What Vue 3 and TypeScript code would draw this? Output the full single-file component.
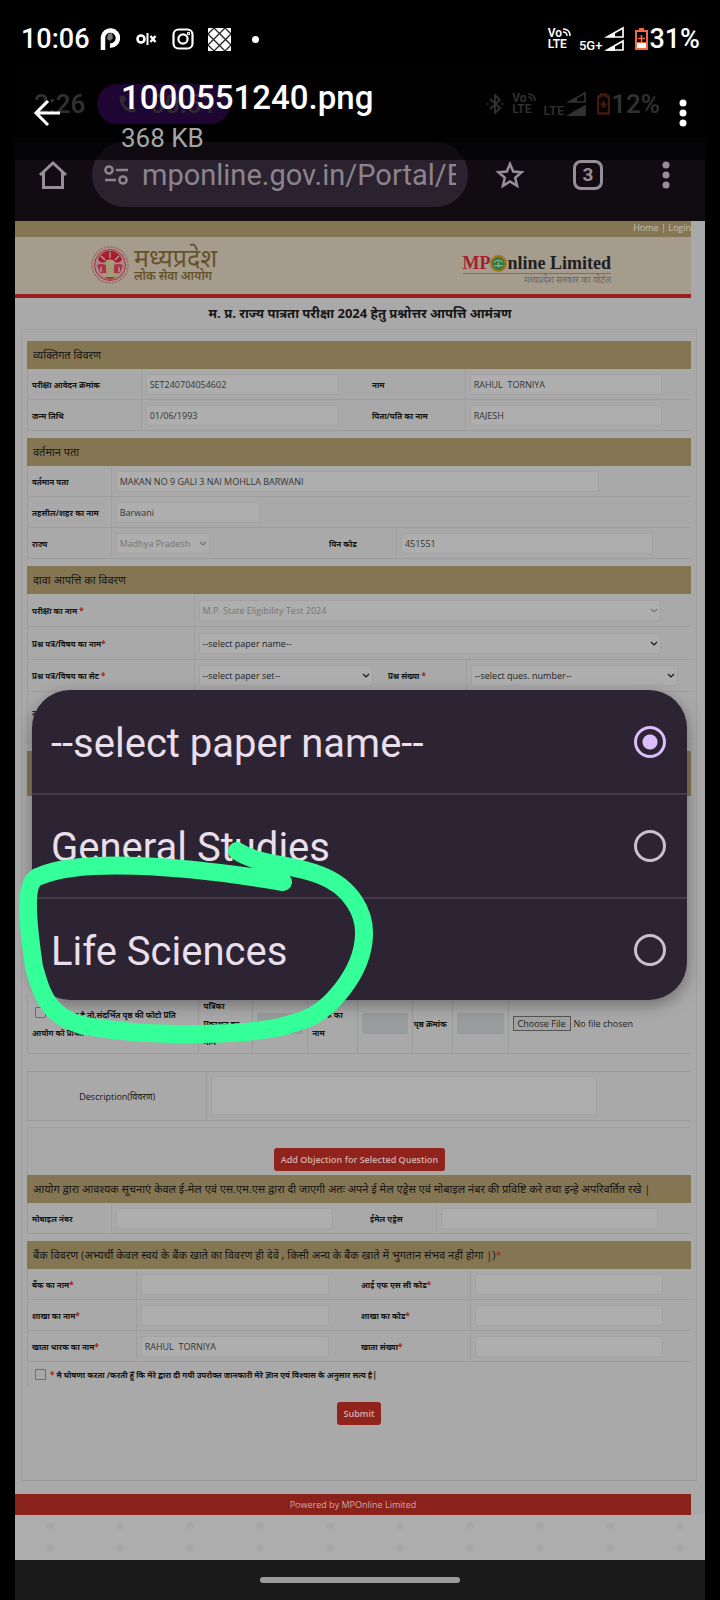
<script setup lang="ts">
import { reactive, ref } from 'vue'

interface Field {
  id: string
  label: string
  required?: boolean
  kind: 'text' | 'select'
  value: string
  size: 'wide' | 'full' | 'long' | 'quarter' | 'half'
  muted?: boolean
}
interface Row {
  layout: string
  fields: Field[]
}
interface Section {
  title: string
  required?: boolean
  rows: Row[]
}

const text = (id: string, label: string, value = '', size: Field['size'] = 'wide', required = false): Field => ({
  id, label, value, size, required, kind: 'text',
})
const pick = (id: string, label: string, value: string, size: Field['size'], required = false, muted = false): Field => ({
  id, label, value, size, required, muted, kind: 'select',
})

const upper = reactive<Section[]>([
  {
    title: 'व्यक्तिगत विवरण',
    rows: [
      { layout: 'personal', fields: [text('app', 'परीक्षा आवेदन क्रमांक', 'SET240704054602'), text('name', 'नाम', 'RAHUL  TORNIYA')] },
      { layout: 'personal', fields: [text('dob', 'जन्म तिथि', '01/06/1993'), text('father', 'पिता/पति का नाम', 'RAJESH')] },
    ],
  },
  {
    title: 'वर्तमान पता',
    rows: [
      { layout: 'single', fields: [text('address', 'वर्तमान पता', 'MAKAN NO 9 GALI 3 NAI MOHLLA BARWANI', 'long')] },
      { layout: 'single', fields: [text('city', 'तहसील/शहर का नाम', 'Barwani', 'quarter')] },
      { layout: 'state', fields: [pick('state', 'राज्य', 'Madhya Pradesh', 'half', false, true), text('pin', 'पिन कोड', '451551')] },
    ],
  },
  {
    title: 'दावा आपत्ति का विवरण',
    rows: [
      { layout: 'exam', fields: [pick('exam', 'परीक्षा का नाम ', 'M.P. State Eligibility Test 2024', 'full', true, true)] },
      { layout: 'exam', fields: [pick('paper', 'प्रश्न पत्र/विषय का नाम', '--select paper name--', 'full', true)] },
      {
        layout: 'paper',
        fields: [
          pick('set', 'प्रश्न पत्र/विषय का सेट ', '--select paper set--', 'full', true),
          pick('question', 'प्रश्न संख्या ', '--select ques. number--', 'full', true),
        ],
      },
    ],
  },
])

const lower = reactive<Section[]>([
  {
    title: 'आयोग द्वारा आवश्यक सूचनाएं केवल ई-मेल एवं एस.एम.एस द्वारा दी जाएगी अतः अपने ई मेल एड्रेस एवं मोबाइल नंबर की प्रविष्टि करे तथा इन्हे अपरिवर्तित रखे |',
    rows: [{ layout: 'contact', fields: [text('mobile', 'मोबाइल नंबर'), text('email', 'ईमेल एड्रेस')] }],
  },
  {
    title: 'बैंक विवरण (अभ्यर्थी केवल स्वयं के बैंक खाते का विवरण ही देवें , किसी अन्य के बैंक खाते में भुगतान संभव नहीं होगा |)',
    required: true,
    rows: [
      { layout: 'bank', fields: [text('bank', 'बैंक का नाम', '', 'wide', true), text('ifsc', 'आई एफ एस सी कोड', '', 'wide', true)] },
      { layout: 'bank', fields: [text('branch', 'शाखा का नाम', '', 'wide', true), text('code', 'शाखा का कोड', '', 'wide', true)] },
      { layout: 'bank', fields: [text('holder', 'खाता धारक का नाम', 'RAHUL  TORNIYA', 'wide', true), text('account', 'खाता संख्या', '', 'wide', true)] },
    ],
  },
])

const papers = ['--select paper name--', 'General Studies', 'Life Sciences']
const chosen = ref(papers[0])
</script>

<template>
  <div class="device">
    <header class="status">
      <span class="clock">10:06</span>
      <svg class="i20 parking" viewBox="0 0 20 24"><path d="M3 23V10a7.500 7.500 0 1 1 7 8.500" fill="none" stroke="#fff" stroke-width="4.500" /><path d="M8 7l4-1 1 5-3 3-3-2z" fill="#777" /></svg>
      <svg class="olx" viewBox="0 0 22 12"><circle cx="5" cy="6" r="3.500" fill="none" stroke="#fff" stroke-width="2.600" /><path d="M11.500 0v12" stroke="#fff" stroke-width="2" /><path d="M14.500 3l5 6M19.500 3l-5 6" stroke="#fff" stroke-width="2.400" /></svg>
      <svg class="i22" viewBox="0 0 22 22" fill="none" stroke="#fff" stroke-width="2.200"><rect x="1.500" y="1.500" width="19" height="19" rx="5" /><circle cx="11" cy="11" r="4.600" /><circle cx="16.500" cy="5.500" r=".6" /></svg>
      <svg class="i23" viewBox="0 0 23 23"><path fill="#fff" d="M0 0h23v23H0z" /><path d="M0 6L6 0M0 17L17 0M6 23L23 6M17 23l6-6M17 0l6 6M6 0l17 17M0 6l17 17M0 17l6 6" stroke="#222" stroke-width="1.300" /></svg>
      <i class="bullet"></i>
      <span class="spring"></span>
      <span class="volte"><b>Vo<svg viewBox="0 0 9 9"><path d="M1 1q7 0 7 7M1 4q4 0 4 4" fill="none" stroke="currentColor" stroke-width="1.500" /></svg></b><b>LTE</b></span>
      <span class="net">5G+</span>
      <svg class="signal" viewBox="0 0 21 26"><path d="M19 2v9H3z M19 15v9H3z" fill="none" stroke="#fff" stroke-width="1.700" /><path d="M2 11l9-5v5zM2 25l9-5v5z" fill="#fff" /></svg>
      <svg class="battery" viewBox="0 0 13 22"><path fill="#f26a3d" d="M4 0h5v2h4v20H0V2h4z" /><path fill="#000" d="M2 4h9v10H2z" /><path fill="#fff" d="M2 15h9v5H2z" /><path d="M6.500 7v7M3 10.500h7" stroke="#f26a3d" stroke-width="1.600" /></svg>
      <span class="clock">31%</span>
    </header>

    <main class="viewer">
      <div class="inner-status">
        <span>2:26</span>
        <span class="call"><svg viewBox="0 0 22 22"><path d="M2 2h5l2 5-3 2q2 5 6 7l2-3 5 2v5q-8 1-13-5T2 2z" fill="currentColor" /></svg>00:51</span>
        <span class="spring"></span>
        <svg class="bt" viewBox="0 0 16 20"><path d="M3 5l10 9-5 5V1l5 5-10 9M0 10h1.500M14.500 10H16" fill="none" stroke="currentColor" stroke-width="1.800" /></svg>
        <span class="volte"><b>Vo<svg viewBox="0 0 9 9"><path d="M1 1q7 0 7 7M1 4q4 0 4 4" fill="none" stroke="currentColor" stroke-width="1.500" /></svg></b><b>LTE</b></span>
        <span class="net">LTE</span>
        <svg class="signal" viewBox="0 0 21 26"><path d="M19 2v9H3z M19 15v9H3z" fill="none" stroke="currentColor" stroke-width="1.700" /><path d="M2 11l9-5v5zM2 25L19 15v10z" fill="currentColor" /></svg>
        <svg class="battery" viewBox="0 0 13 22"><path fill="none" stroke="#c9452a" stroke-width="2.500" d="M4 1.500h5v2h3v17H1v-17h3zM6.500 8v7M3.500 11.500h6" /></svg>
        <span>12%</span>
      </div>

      <nav class="browser">
        <svg class="i30" viewBox="0 0 30 30" fill="none" stroke="currentColor" stroke-width="3"><path d="M2 15L15 3l13 12M5.500 12v15.500h19V12" /></svg>
        <div class="address">
          <svg viewBox="0 0 24 20" fill="none" stroke="currentColor" stroke-width="2.500"><circle cx="5" cy="5" r="3.600" /><path d="M12 5h12M1 15h11" /><circle cx="19" cy="15" r="3.600" /></svg>
          <span>mponline.gov.in/Portal/E</span>
        </div>
        <div class="tools">
          <svg class="i30" viewBox="0 0 30 30" fill="none" stroke="currentColor" stroke-width="2.500"><path d="M15 4l3.200 7.600 8.300.7-6.300 5.400 1.900 8.100L15 21.500l-7.100 4.300 1.900-8.100-6.300-5.400 8.300-.7z" /></svg>
          <span class="tabs">3</span>
          <svg class="i30" viewBox="0 0 30 30" fill="currentColor"><circle cx="15" cy="5" r="3.500" /><circle cx="15" cy="15" r="3.500" /><circle cx="15" cy="25" r="3.500" /></svg>
        </div>
      </nav>

      <div class="toolbar">
        <button class="icon-button" aria-label="Back"><svg viewBox="0 0 28 28" fill="none" stroke="#fff" stroke-width="3"><path d="M27 14H3M15 2L3 14l12 12" /></svg></button>
        <div class="file">
          <h1>1000551240.png</h1>
          <p>368 KB</p>
        </div>
        <button class="icon-button" aria-label="More"><svg viewBox="0 0 28 28" fill="#fff"><circle cx="14" cy="4" r="3.500" /><circle cx="14" cy="14" r="3.500" /><circle cx="14" cy="24" r="3.500" /></svg></button>
      </div>

      <div class="site">
        <div class="links"><a href="#home">Home</a> | <a href="#login">Login</a></div>
        <div class="banner">
          <div class="brand">
            <svg viewBox="0 0 40 40">
              <circle cx="20" cy="20" r="18" fill="#ab9690" stroke="#9a6a60" stroke-width="1.500" stroke-dasharray="2 1" />
              <circle cx="20" cy="20" r="15.500" fill="#a9888a" stroke="#a8313a" />
              <path d="M8 14q5-9 12-8 7-1 12 8-2 5-7 3l-5-3-5 3q-5 2-7-3z" fill="#a61d2b" />
              <path d="M7 20q5-2 9 0v8h-6zM33 20q-5-2-9 0v8h6zM12 31h16l-8 4z" fill="#a83643" />
              <path d="M16 15h8l-1 15h-6zM13 29h14v3H13z" fill="#a59c76" />
              <path d="M11 11l4 4M20 7v6M29 11l-4 4M11 22v5M29 22v5" stroke="#b9aaa5" stroke-width="1.200" />
            </svg>
            <div><strong>मध्यप्रदेश</strong><span>लोक सेवा आयोग</span></div>
          </div>
          <div class="mponline">
            <div class="wordmark">
              <span>MP</span>
              <svg viewBox="0 0 16 16"><circle cx="8" cy="8" r="7" fill="#2d7b45" stroke="#a5761f" stroke-width="2" /><path d="M4 7q4-4 8 0M4 10h8M8 6v6" fill="none" stroke="#93b09a" /></svg>
              nline Limited
            </div>
            <small>मध्यप्रदेश सरकार का पोर्टल</small>
          </div>
        </div>
        <h2>म. प्र. राज्य पात्रता परीक्षा 2024 हेतु प्रश्नोत्तर आपत्ति आमंत्रण</h2>

        <form class="form" @submit.prevent>
          <section v-for="s in upper" :key="s.title">
            <h3>{{ s.title }}</h3>
            <div v-for="(r, n) in s.rows" :key="n" class="row" :class="r.layout">
              <template v-for="f in r.fields" :key="f.id">
                <label :for="f.id">{{ f.label }}<em v-if="f.required">*</em></label>
                <div class="cell">
                  <input v-if="f.kind === 'text'" :id="f.id" v-model="f.value" type="text" :class="f.size" />
                  <div v-else class="select" :class="[f.size, { muted: f.muted }]">
                    <select :id="f.id" v-model="f.value"><option>{{ f.value }}</option></select>
                    <svg viewBox="0 0 8 6"><path d="M1 1l3 3 3-3" fill="none" stroke="currentColor" stroke-width="1.200" /></svg>
                  </div>
                </div>
              </template>
            </div>
            <div v-if="s.rows[0].layout === 'exam'" class="row remark"><span>स</span></div>
          </section>

          <section class="evidence">
            <h3></h3>
            <div class="details"></div>
            <div class="reference">
              <div class="copy">
                <input id="copy" type="checkbox" /><label for="copy">यदि दिया है तो,संदर्भित पृष्ठ की फोटो प्रति आयोग को प्रेषित करें</label>
              </div>
              <label for="book">पत्रिका प्रकाशन का नाम</label>
              <div><input id="book" type="text" disabled /></div>
              <label for="author">लेखक का नाम</label>
              <div><input id="author" type="text" disabled /></div>
              <label class="one-line" for="page">पृष्ठ क्रमांक</label>
              <div><input id="page" type="text" disabled /></div>
              <div><input type="file" aria-label="File" /></div>
            </div>
          </section>

          <div class="description">
            <label for="description">Description(विवरण)</label>
            <div><textarea id="description"></textarea></div>
          </div>
          <div class="action"><button class="red">Add Objection for Selected Question</button></div>

          <section v-for="s in lower" :key="s.title">
            <h3>{{ s.title }}<em v-if="s.required">*</em></h3>
            <div v-for="(r, n) in s.rows" :key="n" class="row" :class="r.layout">
              <template v-for="f in r.fields" :key="f.id">
                <label :for="f.id">{{ f.label }}<em v-if="f.required">*</em></label>
                <div class="cell"><input :id="f.id" v-model="f.value" type="text" :class="f.size" /></div>
              </template>
            </div>
          </section>

          <div class="declare">
            <input id="declare" type="checkbox" />
            <label for="declare"><em>*</em> मै घोषणा करता /करती हूँ कि मेरे द्वारा दी गयी उपरोक्त जानकारी मेरे ज्ञान एवं विश्वास के अनुसार सत्य है|</label>
          </div>
          <div class="submit"><button class="red">Submit</button></div>
        </form>

        <footer>Powered by MPOnline Limited</footer>
        <div class="pattern"></div>

        <div class="picker" role="dialog" aria-label="Paper name">
          <label v-for="p in papers" :key="p">
            <span>{{ p }}</span>
            <input v-model="chosen" type="radio" name="picker" :value="p" />
          </label>
          <svg class="marker" viewBox="0 0 360 200">
            <path d="M217 15C240 30 270 27 300 39C332 51 345 78 344 99C343 135 310 178 277 186C235 202 130 200 80 192C30 188 22 160 14 131C8 90 2 44 20 40C60 23 155 28 263 46" />
          </svg>
        </div>
      </div>
    </main>
    <div class="gesture"><i></i></div>
  </div>
</template>

<style>
body {
  margin: 0;
  background: #000;
}
</style>

<style scoped>
* {
  box-sizing: border-box;
}
.device {
  min-height: 100vh;
  background: #000;
  color: #fff;
  font-family: Roboto, "Noto Sans", sans-serif;
}
svg {
  display: block;
  flex: none;
}
.status,
.inner-status {
  display: flex;
  align-items: center;
  font-size: 27px;
  font-weight: 500;
}
.status {
  height: 66px;
  padding: 12px 20px 0 21px;
}
.spring {
  flex: 1;
}
.parking { width: 20px; height: 24px; margin-left: 10px; }
.olx { width: 22px; height: 12px; margin-left: 16px; }
.i22 { width: 22px; height: 22px; margin-left: 14px; }
.i23 { width: 23px; height: 23px; margin-left: 14px; }
.i30 { width: 30px; height: 30px; }
.bullet {
  width: 7px;
  height: 7px;
  margin-left: 21px;
  border-radius: 50%;
  background: #fff;
}
.volte {
  display: flex;
  flex-direction: column;
  font-size: 12px;
  line-height: 11px;
}
.volte b {
  display: flex;
  font-weight: 600;
}
.volte svg {
  width: 9px;
  height: 9px;
}
.net {
  align-self: center;
  margin: 13px 2px 0 8px;
  font-size: 13px;
  line-height: 14px;
}
.signal {
  width: 21px;
  height: 26px;
}
.battery {
  width: 13px;
  height: 22px;
  margin: 0 1px 0 10px;
}
.viewer {
  position: relative;
  margin: 0 15px;
}
.inner-status {
  height: 76px;
  padding: 0 45px 0 19px;
  background: #060408;
  color: #8c8c8c;
  font-size: 26px;
}
.call {
  display: flex;
  align-items: center;
  gap: 12px;
  width: 133px;
  height: 40px;
  margin-left: 12px;
  padding-left: 21px;
  border-radius: 20px;
  background: #561192;
  color: #8a7a96;
}
.call svg {
  width: 20px;
  height: 20px;
}
.bt {
  width: 16px;
  height: 20px;
  margin-right: 9px;
}
.browser {
  display: flex;
  align-items: flex-start;
  height: 79px;
  padding: 0 24px 0 23px;
  background: #110c12;
  color: #968f98;
}
.browser > .i30 {
  margin: 18px 24px 0 0;
}
.address {
  display: flex;
  flex: 1;
  align-items: center;
  gap: 14px;
  min-width: 0;
  height: 65px;
  padding: 0 12px;
  border-radius: 33px;
  background: #2b222f;
  color: #8b838d;
  font-size: 29px;
}
.address svg {
  width: 24px;
  height: 20px;
}
.address span {
  overflow: hidden;
  white-space: nowrap;
}
.tools {
  display: flex;
  gap: 48px;
  margin: 18px 0 0 27px;
}
.tabs {
  width: 30px;
  height: 30px;
  border: 3px solid currentColor;
  border-radius: 8px;
  font-size: 19px;
  font-weight: 700;
  line-height: 24px;
  text-align: center;
}
.toolbar {
  position: absolute;
  top: 0;
  left: 0;
  right: 0;
  display: flex;
  align-items: center;
  height: 94px;
  padding: 0 8px 0 18px;
  background: rgba(0, 0, 0, 0.65);
}
.icon-button {
  padding: 0;
  border: 0;
  background: none;
}
.icon-button svg {
  width: 28px;
  height: 28px;
}
.file {
  flex: 1;
  padding: 5px 0 0 60px;
}
.file h1 {
  margin: 0;
  font-size: 33px;
  font-weight: 500;
  line-height: 42px;
}
.file p {
  margin: 3px 0 0;
  color: #a5a5a5;
  font-size: 26px;
  line-height: 32px;
}
.site {
  position: relative;
  background: #a9a9a9;
  color: #161616;
  font-family: "Open Sans", "Noto Sans", sans-serif;
  font-size: 9px;
}
.links {
  height: 16px;
  margin-right: 14px;
  background: #857653;
  color: #c6c0b2;
  line-height: 14px;
  text-align: right;
}
.links a {
  color: inherit;
  text-decoration: none;
}
.banner {
  display: flex;
  justify-content: space-between;
  height: 61px;
  margin-right: 14px;
  padding: 8px 80px 0 75px;
  border-bottom: 4px solid #9a1e1d;
  background: #a59c8e;
}
.brand {
  display: flex;
  gap: 4px;
  color: #665329;
}
.brand svg {
  width: 40px;
  height: 40px;
}
.brand strong,
.brand span {
  display: block;
  white-space: nowrap;
}
.brand strong {
  font-size: 25px;
  font-weight: 400;
  line-height: 25px;
}
.brand span {
  font-size: 12px;
  font-weight: 600;
  line-height: 12px;
}
.mponline {
  padding-top: 9px;
  text-align: right;
}
.wordmark {
  display: flex;
  align-items: center;
  border-bottom: 1px solid #77716a;
  color: #202020;
  font: 700 18px/19px "Liberation Serif", serif;
}
.wordmark span {
  color: #a5202f;
}
.wordmark svg {
  width: 17px;
  height: 17px;
}
.mponline small {
  display: block;
  color: #6a6767;
  font-size: 9px;
  line-height: 12px;
}
h2 {
  margin: 0;
  font-size: 13px;
  font-weight: 700;
  line-height: 31px;
  text-align: center;
}
.form {
  margin: 0 8px 0 6px;
  padding: 11px 5px 0;
  border: 1px solid #a0a0a0;
  border-bottom-color: #999;
}
section {
  margin-bottom: 7px;
}
h3 {
  min-height: 28px;
  margin: 0;
  padding-left: 6px;
  background: #857653;
  font-size: 11px;
  font-weight: 400;
  line-height: 28px;
  white-space: nowrap;
}
em {
  color: #b01818;
  font-style: normal;
}
.row {
  display: grid;
  min-height: 31px;
  border: solid #9d9d9d;
  border-width: 0 0 1px 1px;
}
.personal { grid-template-columns: 113fr 228fr 97fr 227fr; }
.single { grid-template-columns: 83fr 582fr; }
.state { grid-template-columns: 83fr 215fr 71fr 296fr; }
.exam { grid-template-columns: 166fr 499fr; min-height: 33px; }
.paper { grid-template-columns: 166fr 191fr 82fr 226fr; min-height: 32px; }
.contact { grid-template-columns: 83fr 256fr 70fr 256fr; }
.bank { grid-template-columns: 108fr 222fr 113fr 222fr; }
.row > label {
  align-self: center;
  padding-left: 4px;
  font-size: 8px;
  font-weight: 700;
  white-space: pre;
}
.cell {
  display: flex;
  align-items: center;
  min-width: 0;
  padding-left: 4px;
  border-left: 1px solid #9f9f9f;
}
.cell input,
select,
textarea {
  height: 21px;
  margin: 0;
  padding: 0 3px;
  border: 1px solid #a3a3a3;
  border-radius: 2px;
  outline: 0;
  background: #aeaeae;
  color: #353535;
  font: inherit;
}
.select {
  position: relative;
}
select {
  display: block;
  width: 100%;
  appearance: none;
  color: #1d1d1d;
}
.select svg {
  position: absolute;
  top: 8px;
  right: 3px;
  width: 8px;
  height: 6px;
}
.muted,
.muted select {
  color: #757575;
}
.cell .wide { width: 87%; }
.cell .full { width: 94%; }
.cell .long { width: 84%; }
.cell .quarter { width: 25%; }
.cell .half { width: 45%; }
.remark {
  min-height: 52px;
  padding: 15px 0 0 4px;
}
.evidence {
  margin-bottom: 17px;
}
.evidence h3 {
  min-height: 45px;
}
.details {
  min-height: 198px;
}
.reference {
  display: grid;
  grid-template-columns: 171fr 54fr 55fr 50fr 55fr 40fr 56fr 184fr;
  min-height: 60px;
  border: solid #9a9a9a;
  border-width: 0 0 1px 1px;
  font-size: 8px;
  font-weight: 700;
  line-height: 18px;
}
.reference > * {
  display: flex;
  align-items: center;
  min-width: 0;
  padding: 0 4px;
}
.reference > * + * {
  border-left: 1px solid #9a9a9a;
}
.reference .one-line {
  padding: 0 1px;
  white-space: nowrap;
}
.reference .copy {
  display: block;
  padding: 12px 14px 0 4px;
}
input[type="checkbox"] {
  width: 11px;
  height: 11px;
  margin: 0 4px 0 3px;
  border: 1px solid #6c6c6c;
  border-radius: 1px;
  appearance: none;
}
.reference [type="text"] {
  width: 100%;
  height: 21px;
  border: 0;
  border-radius: 2px;
  background: #999c9c;
}
[type="file"] {
  width: 100%;
  color: #222;
  font: 9px "Open Sans", sans-serif;
}
[type="file"]::file-selector-button {
  margin-right: 3px;
  padding: 0 4px;
  border: 1px solid #555;
  background: #a2a2a2;
  color: #222;
  font: inherit;
}
.description {
  display: grid;
  grid-template-columns: 179fr 486fr;
  min-height: 50px;
  border: 1px solid #9a9a9a;
  border-right: 0;
}
.description label {
  align-self: center;
  text-align: center;
}
.description div {
  padding: 4px;
  border-left: 1px solid #9a9a9a;
}
textarea {
  display: block;
  width: 81%;
  height: 39px;
  resize: none;
}
.action {
  margin-top: 6px;
  padding: 20px 0 4px;
  border: solid #9f9f9f;
  border-width: 1px 0 0 1px;
  text-align: center;
}
.red {
  height: 23px;
  padding: 0 7px;
  border: 0;
  border-radius: 3px;
  background: #90231c;
  color: #d3b1ad;
  font: 600 9px "Open Sans", sans-serif;
}
.declare {
  display: flex;
  align-items: center;
  height: 24px;
  margin-top: -7px;
  padding-left: 4px;
  border-left: 1px solid #9f9f9f;
  font-size: 8px;
  font-weight: 700;
  white-space: nowrap;
}
.submit {
  min-height: 94px;
  padding-top: 16px;
  text-align: center;
}
footer {
  margin: 13px 14px 0 0;
  background: #8a211b;
  color: #cdaaa7;
  line-height: 21px;
  text-align: center;
}
.pattern {
  height: 45px;
  background: radial-gradient(circle, #a6a6a6 2px, transparent 5px) 0 0 / 70px 22px #adadad;
}
.picker {
  position: absolute;
  top: 469px;
  left: 17px;
  right: 18px;
  border-radius: 38px;
  background: #2d2433;
  box-shadow: 0 5px 16px rgba(0, 0, 0, 0.35);
  color: #e8dfeb;
  font-family: Roboto, sans-serif;
  font-size: 40px;
}
.picker label {
  display: flex;
  align-items: center;
  justify-content: space-between;
  height: 104px;
  padding: 0 21px 0 19px;
}
.picker label:not(:nth-of-type(2)) {
  height: 103px;
}
.picker label + label {
  border-top: 2px solid #433a49;
}
.picker span {
  padding-top: 3px;
}
.picker input {
  width: 32px;
  height: 32px;
  margin: 0;
  border: 3px solid #cbc1ce;
  border-radius: 50%;
  appearance: none;
}
.picker input:checked {
  border-color: #dcbcfb;
  background: radial-gradient(circle, #dcbcfb 7px, transparent 8px);
}
.marker {
  position: absolute;
  top: 146px;
  left: -12px;
  width: 360px;
  height: 200px;
  overflow: visible;
  pointer-events: none;
}
.marker path {
  fill: none;
  stroke: #34ff99;
  stroke-width: 18;
  stroke-linecap: round;
  stroke-linejoin: round;
}
.gesture {
  display: flex;
  align-items: center;
  justify-content: center;
  height: 40px;
  margin: 0 15px;
  background: #1a1a1a;
}
.gesture i {
  width: 29%;
  height: 6px;
  border-radius: 3px;
  background: #9c9c9c;
}
</style>
